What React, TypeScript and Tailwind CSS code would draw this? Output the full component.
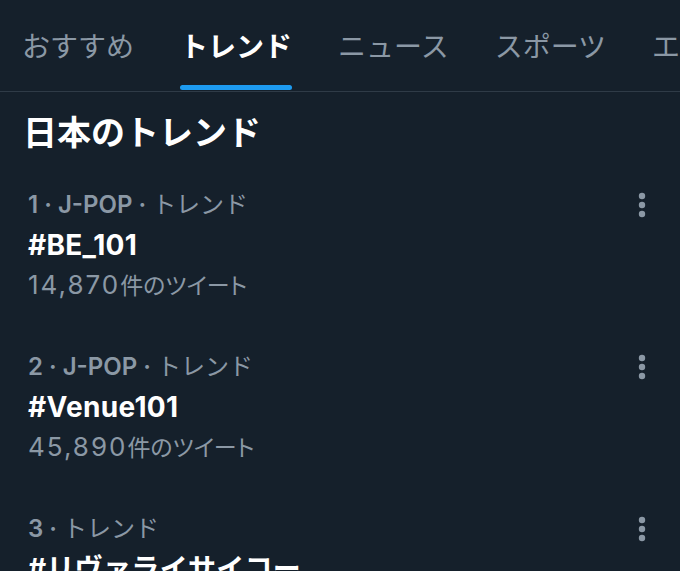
const tabs = [
  { label: "おすすめ", active: false },
  { label: "トレンド", active: true },
  { label: "ニュース", active: false },
  { label: "スポーツ", active: false },
  { label: "エンタメ", active: false },
];

const trends = [
  { meta: "1 · J-POP · ", tag: "トレンド", title: "#BE_101", count: "14,870", unit: "件のツイート" },
  { meta: "2 · J-POP · ", tag: "トレンド", title: "#Venue101", count: "45,890", unit: "件のツイート" },
  { meta: "3 · ", tag: "トレンド", title: "#リヴァライサイコー", count: "", unit: "" },
];

function MoreIcon() {
  return (
    <svg width="8" height="26" viewBox="0 0 8 26" className="fill-[#8b98a5]">
      <circle cx="4" cy="4" r="3.2" />
      <circle cx="4" cy="13" r="3.2" />
      <circle cx="4" cy="22" r="3.2" />
    </svg>
  );
}

export default function App() {
  return (
    <div
      className="h-[571px] w-[680px] overflow-hidden bg-[#15202b]"
      style={{ fontFamily: '"Noto Sans CJK JP", "Noto Sans", sans-serif' }}
    >
      <div className="flex h-[92px] gap-[46px] overflow-hidden whitespace-nowrap border-b border-[#2f3b47] pl-[22px]">
        {tabs.map((tab) => (
          <div key={tab.label} className="relative flex h-full shrink-0 items-center pb-[2px]">
            <span
              className={`text-[28px] leading-none ${
                tab.active ? "font-bold text-white" : "text-[#8b98a5]"
              }`}
            >
              {tab.label}
            </span>
            {tab.active ? (
              <span className="absolute bottom-[1px] left-0 h-[5px] w-full rounded-full bg-[#1d9bf0]" />
            ) : null}
          </div>
        ))}
      </div>

      <h1 className="pl-[23px] pt-[18px] text-[34px] font-bold leading-[42px] text-white">
        日本のトレンド
      </h1>

      <div
        className="pt-[33px]"
        style={{ fontFamily: 'Inter, "Noto Sans CJK JP", sans-serif' }}
      >
        {trends.map((trend) => (
          <div key={trend.title} className="flex h-[162px] justify-between pl-[28px] pr-[34px]">
            <div>
              <p className="h-[40px] whitespace-pre text-[24px] font-semibold leading-[40px] text-[#8b98a5]">
                {trend.meta}
                <span className="font-normal">{trend.tag}</span>
              </p>
              <p className="h-[40px] whitespace-nowrap text-[28px] font-bold leading-[40px] tracking-[0.3px] text-white">
                {trend.title}
              </p>
              <p className="h-[40px] text-[26px] leading-[40px] text-[#8b98a5]">
                <span className="tracking-[2px]">{trend.count}</span>
                <span className="text-[23px] [font-feature-settings:'palt']">{trend.unit}</span>
              </p>
            </div>
            <div className="pt-[7px]">
              <MoreIcon />
            </div>
          </div>
        ))}
      </div>
    </div>
  );
}
